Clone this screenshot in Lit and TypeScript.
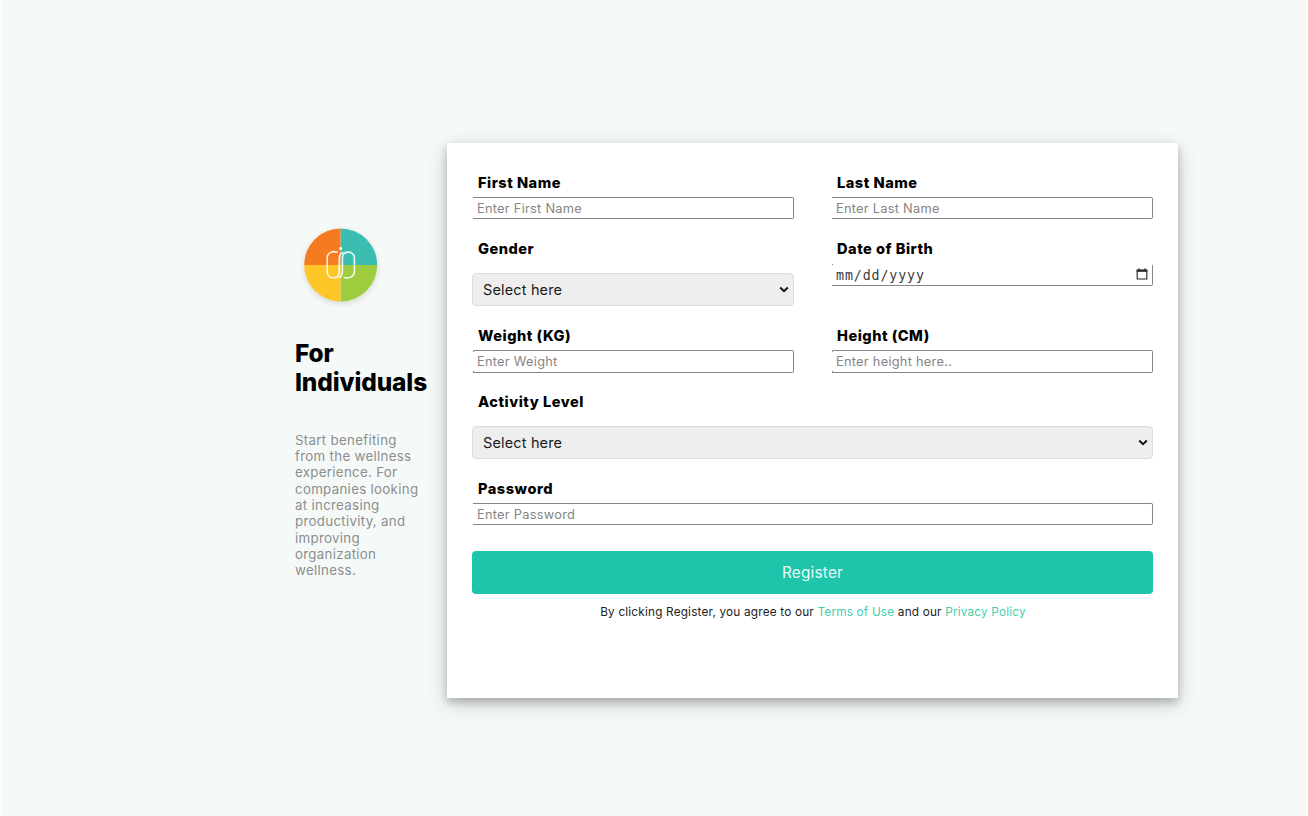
import { LitElement, html, css, svg } from "lit";
import { customElement } from "lit/decorators.js";

const chevron = svg`<path d="M1.2 1.6 5 5.2 8.8 1.6" fill="none" stroke="#111" stroke-width="2"/>`;

@customElement("app-root")
export class AppRoot extends LitElement {
  static styles = css`
    :host {
      display: block;
      font-family: Inter, "Liberation Sans", sans-serif;
      color: #000;
    }
    * {
      box-sizing: border-box;
    }
    .page {
      display: flex;
      height: 816px;
      padding: 143px 0 0 295px;
      background: #f5faf9;
      border-left: 1px solid #fdfefe;
      border-right: 1px solid #fdfefe;
      overflow: hidden;
    }
    .intro {
      width: 151px;
      padding-top: 82px;
      margin-left: -1px;
    }
    .logo {
      display: block;
      width: 92px;
      height: 92px;
    }
    h1 {
      margin: 22px 0 0;
      font-size: 24.4px;
      line-height: 28.5px;
      font-weight: 800;
      letter-spacing: -0.1px;
    }
    .blurb {
      width: 140px;
      margin: 35.7px 0 0;
      font-size: 13.3px;
      line-height: 16.35px;
      letter-spacing: 0.3px;
      color: #8b8e8d;
    }
    .card {
      flex: none;
      width: 731px;
      height: 554.5px;
      margin-left: 1px;
      padding: 30px 25px 0 25px;
      background: #fff;
      box-shadow: 0 4px 8px rgba(0, 0, 0, 0.2), 0 6px 20px rgba(0, 0, 0, 0.19);
    }
    .row {
      display: grid;
      grid-template-columns: 322px 322px;
      column-gap: 37px;
    }
    .row.names { height: 67px; }
    .row.birth { height: 87px; }
    .row.body { height: 65px; }
    .row.wide { grid-template-columns: 681px; height: 87px; }
    .row.secret { grid-template-columns: 681px; height: 71.5px; }
    .label {
      display: block;
      padding-left: 6px;
      height: 18px;
      font-size: 14.6px;
      line-height: 20px;
      font-weight: 800;
      letter-spacing: 0.5px;
      white-space: nowrap;
    }
    .birth .label,
    .body .label {
      line-height: 18px;
    }
    .input {
      display: flex;
      align-items: center;
      width: calc(100% - 1px);
      height: 22px;
      margin: 6px 0 0 1px;
      padding: 1px 4px 0 4px;
      border: 1px solid #858585;
      border-left: 0;
      border-radius: 0 2px 2px 0;
      outline: 0;
      background: #fff;
      font: 12.8px Inter, sans-serif;
      letter-spacing: 0.27px;
      color: #222;
    }
    .input::placeholder {
      color: #858585;
      opacity: 1;
    }
    .input.tall {
      height: 23px;
      margin-top: 5px;
      border-left: 1px solid transparent;
      padding: 0 4px 0 3px;
      background: linear-gradient(#858585, #858585) 0 0 / 1px 2px no-repeat border-box,
        linear-gradient(#858585, #858585) 0 100% / 1px 2px no-repeat border-box;
    }
    .date {
      justify-content: space-between;
      border-top-color: transparent;
      font-family: "DejaVu Sans Mono", monospace;
      font-size: 13.3px;
      letter-spacing: 0.88px;
      color: #3c3c3c;
      background: linear-gradient(#858585, #858585) 0 0 / 1px 1px no-repeat border-box;
    }
    .date svg {
      width: 12px;
      height: 12px;
      margin-bottom: 4px;
    }
    .select {
      display: flex;
      align-items: center;
      justify-content: space-between;
      height: 33px;
      margin-top: 15px;
      padding: 0 4px 0 10px;
      border: 1px solid #dcdcdc;
      border-radius: 4px;
      background: #eee;
      font-size: 14.5px;
      letter-spacing: 0.15px;
      color: #1a1a1a;
    }
    .select svg {
      width: 10px;
      height: 7px;
    }
    .row.wide .select { margin-top: 16px; }
    .register {
      display: block;
      width: 681px;
      height: 43.5px;
      padding: 0;
      border: 0;
      border-radius: 4px;
      background: #1ec5aa;
      color: #e9fbf7;
      font: 15.3px Inter, sans-serif;
      letter-spacing: 0.25px;
    }
    .terms {
      margin: 9.5px 0 0 1px;
      text-align: center;
      font-size: 11.8px;
      line-height: 16px;
      letter-spacing: 0.18px;
      color: #222;
      white-space: nowrap;
    }
    .link {
      color: #45ceb0;
      text-decoration: none;
    }
  `;

  private text(label: string, placeholder: string, kind = "") {
    return html`<label class="field">
      <span class="label">${label}</span>
      <input class="input ${kind}" placeholder=${placeholder} />
    </label>`;
  }

  private select(label: string) {
    return html`<div class="field">
      <span class="label">${label}</span>
      <div class="select" role="combobox">
        <span>Select here</span>
        <svg viewBox="0 0 10 7">${chevron}</svg>
      </div>
    </div>`;
  }

  render() {
    return html`<main class="page">
      <section class="intro">
        <svg class="logo" viewBox="0 0 92 92">
          <defs>
            <filter id="soft" x="-20%" y="-20%" width="140%" height="140%">
              <feDropShadow dx="0" dy="2" stdDeviation="3" flood-opacity=".16" />
            </filter>
          </defs>
          <circle cx="45.7" cy="40" r="36" fill="#fff" filter="url(#soft)" />
          <path d="M45.7 40V3.5A36.5 36.5 0 0 0 9.2 40Z" fill="#f47b20" />
          <path d="M45.7 40V3.5A36.5 36.5 0 0 1 82.2 40Z" fill="#3bbdb1" />
          <path d="M45.7 40H9.2A36.5 36.5 0 0 0 45.7 76.5Z" fill="#fec526" />
          <path d="M45.7 40H82.2A36.5 36.5 0 0 1 45.7 76.5Z" fill="#a0cd40" />
          <g fill="none" stroke="#fff" stroke-opacity=".88" stroke-width="1.6" stroke-linecap="round">
            <path d="M42 27.2C37 25.6 32.2 28 32.2 33V46.5C32.2 50.5 34.8 52.8 38.3 52.8S44.2 50.5 44.2 46.5V34C44.2 30.5 45.3 28.5 47.6 27.6" />
            <path d="M49.4 52.4C54.4 54 59.4 51.5 59.4 46.5V33.4C59.4 29.4 56.8 27.1 53.3 27.1S47.4 29.4 47.4 33.4V46C47.4 49.5 46.4 51.4 44.6 52.6" />
          </g>
          <circle cx="45.6" cy="23.6" r="1.5" fill="#fff" />
        </svg>
        <h1>For<br />Individuals</h1>
        <p class="blurb">
          Start benefiting<br />from the wellness<br />experience. For<br />companies looking<br />at
          increasing<br />productivity, and<br />improving<br />organization<br />wellness.
        </p>
      </section>
      <section class="card">
        <div class="row names">
          ${this.text("First Name", "Enter First Name")} ${this.text("Last Name", "Enter Last Name")}
        </div>
        <div class="row birth">
          ${this.select("Gender")}
          <div class="field">
            <span class="label">Date of Birth</span>
            <div class="input date">
              <span>mm/dd/yyyy</span>
              <svg viewBox="0 0 12 12">
                <path d="M1.2 2.2H10.8V11H1.2ZM3 .3V2M9 .3V2" fill="none" stroke="#222" stroke-width="1.1" />
                <path d="M.7 1.6H11.3V3.8H.7Z" fill="#222" />
              </svg>
            </div>
          </div>
        </div>
        <div class="row body">
          ${this.text("Weight (KG)", "Enter Weight", "tall")}
          ${this.text("Height (CM)", "Enter height here..", "tall")}
        </div>
        <div class="row wide">${this.select("Activity Level")}</div>
        <div class="row secret">${this.text("Password", "Enter Password")}</div>
        <button class="register">Register</button>
        <p class="terms">
          By clicking Register, you agree to our <a class="link">Terms of Use</a> and our
          <a class="link">Privacy Policy</a>
        </p>
      </section>
    </main>`;
  }
}
